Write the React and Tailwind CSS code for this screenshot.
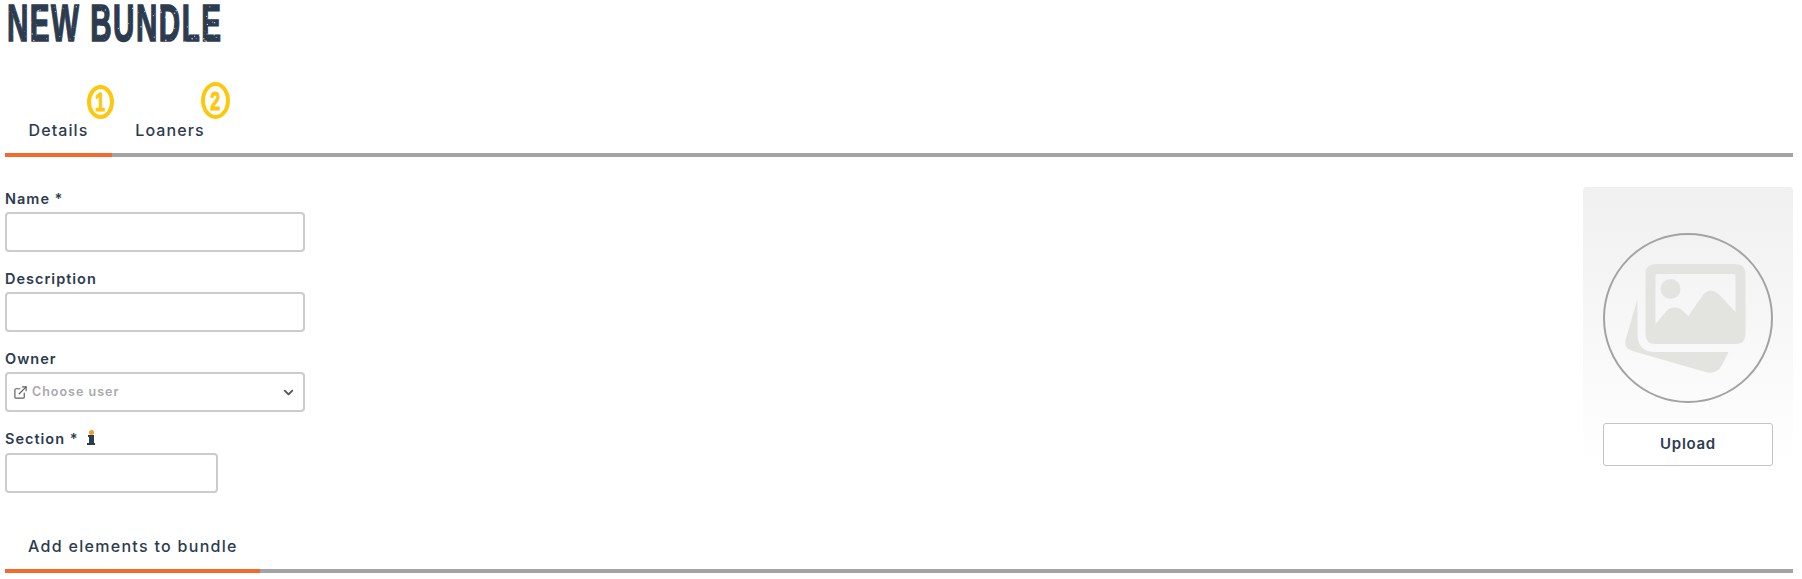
import React from "react";
import { ChevronDown, ExternalLink } from "lucide-react";

const sans = "font-['Inter',sans-serif]";

function Label({ children, extra }) {
  return (
    <div className="h-5 flex items-center gap-[8px] text-[14.5px] font-semibold tracking-[1px] text-[#2d3b4e] font-['Inter',sans-serif]">
      <span>{children}</span>
      {extra}
    </div>
  );
}

function Field({ label, width = "w-[300px]", extra, children, gap = "mt-[3px]" }) {
  return (
    <div className="flex flex-col">
      <Label extra={extra}>{label}</Label>
      <div className={`${width} h-[40px] ${gap} rounded-[4px] border-2 border-[#cccccc] bg-white flex items-center`}>
        {children}
      </div>
    </div>
  );
}

function Badge({ n, className }) {
  return (
    <span className={`absolute rounded-[50%] border-[4px] border-[#fcc70d] flex items-center justify-center text-[#fcc70d] ${className}`}>
      <span className="inline-block scale-x-[0.68] text-[26px] leading-none font-bold [-webkit-text-stroke:1px_#fcc70d] font-['Liberation_Sans',sans-serif]">
        {n}
      </span>
    </span>
  );
}

function ImageGlyph() {
  return (
    <svg viewBox="-2.5 0 140 125" className="w-[140px] h-[125px]" fill="#e3e3df">
      <path d="M17 43 L5 84 Q3 92 12 95 L85 116 Q97 119 102 108 L108 96 H35 Q17 96 17 78 Z" />
      <path
        fillRule="evenodd"
        d="M35 8 H115 Q125 8 125 18 V78 Q125 88 115 88 H35 Q25 88 25 78 V18 Q25 8 35 8 Z M35 68 V20 Q35 18 37 18 H113 Q115 18 115 20 V56 L98 38 Q90 31 83 38 L68 60 L60 53 Q53 49 47 54 Z M50 23 A10 10 0 1 0 50 43 A10 10 0 1 0 50 23 Z"
      />
    </svg>
  );
}

const specks = [];
let seed = 7;
for (let i = 0; i < 150; i++) {
  seed = (seed * 1103515245 + 12345) % 2147483648;
  const x = 7 + (seed % 2180) / 10;
  seed = (seed * 1103515245 + 12345) % 2147483648;
  const y = 6 + (seed % 360) / 10;
  seed = (seed * 1103515245 + 12345) % 2147483648;
  specks.push([x, y, 0.3 + (seed % 50) / 100]);
}

export default function App() {
  return (
    <div className={`w-[1802px] h-[579px] bg-white overflow-hidden relative ${sans}`}>
      <div className="relative h-[50px]">
        <h1 className="inline-block origin-left scale-x-[0.58] pl-[12px] text-[51px] leading-[47px] font-bold tracking-[2.6px] text-[#2d3b4e] [-webkit-text-stroke:1.5px_#2d3b4e] font-['Liberation_Sans',sans-serif]">
          NEW BUNDLE
        </h1>
        <svg className="absolute left-0 top-0 w-[235px] h-[50px]" viewBox="0 0 235 50" fill="#ffffff" opacity="0.75">
          {specks.map(([x, y, r], i) => (
            <circle key={i} cx={x} cy={y} r={r} />
          ))}
        </svg>
      </div>

      <div className="relative mt-[27px] ml-[5px] mr-[9px] h-[80px] border-b-4 border-[#a2a4a2] flex">
        <Badge n="1" className="left-[82px] top-[8px] w-[27px] h-[34px]" />
        <Badge n="2" className="left-[196px] top-[5px] w-[29px] h-[37px]" />
        <div className="w-[107px] h-[80px] flex items-end justify-center pb-[11px] border-b-4 border-[#f26a2e] text-[16px] font-medium tracking-[1.1px] text-[#2d3b4e]">
          Details
        </div>
        <div className="w-[116px] h-[76px] flex items-end justify-center pb-[11px] text-[16px] font-medium tracking-[1.1px] text-[#2d3b4e]">
          Loaners
        </div>
      </div>

      <div className="flex justify-between pl-[5px] pr-[9px] mt-[30px]">
        <div className="flex flex-col gap-[17px] mt-[2px]">
          <Field label="Name *" />
          <Field label="Description" />
          <Field label="Owner">
            <ExternalLink className="w-[15px] h-[15px] ml-[6px] text-[#606060]" strokeWidth={1.9} />
            <span className="ml-[4px] text-[12.5px] font-semibold tracking-[1px] text-[#a9a9a9]">Choose user</span>
            <ChevronDown className="w-[15px] h-[15px] ml-auto mr-[7px] text-[#555555]" strokeWidth={3} />
          </Field>
          <Field
            label="Section *"
            width="w-[213px]"
            gap="mt-[4px]"
            extra={
              <span className="relative w-[8px] h-[15px] block -mt-[3px]">
                <span className="absolute left-[2px] top-0 w-[5px] h-[5px] rounded-full bg-[#f59a23]" />
                <span className="absolute left-[1px] top-[5px] w-[6px] h-[2px] bg-[#2d3b4e]" />
                <span className="absolute left-[2px] top-[6px] w-[5px] h-[8px] bg-[#2d3b4e]" />
                <span className="absolute left-0 bottom-0 w-[8px] h-[2px] bg-[#2d3b4e]" />
              </span>
            }
          />
        </div>

        <div className="w-[210px] h-[283px] rounded-[4px] bg-gradient-to-b from-[#f0f0f0] to-white px-[20px] pt-[46px] flex flex-col">
          <div className="w-[170px] h-[170px] rounded-full border-2 border-[#a2a4a2] flex items-center justify-center shrink-0">
            <ImageGlyph />
          </div>
          <button className="mt-[20px] w-[170px] h-[43px] rounded-[3px] border border-[#c4c4c4] bg-white text-[15px] font-semibold tracking-[0.7px] text-[#2d3b4e]">
            Upload
          </button>
        </div>
      </div>

      <div className="absolute left-[5px] right-[9px] top-[520px] h-[53px] border-b-4 border-[#a2a4a2]">
        <div className="w-[255px] h-[53px] border-b-4 border-[#f26a2e] flex items-end pl-[23px] pb-[11px] text-[16px] font-medium tracking-[1.3px] text-[#2d3b4e]">
          Add elements to bundle
        </div>
      </div>
    </div>
  );
}
